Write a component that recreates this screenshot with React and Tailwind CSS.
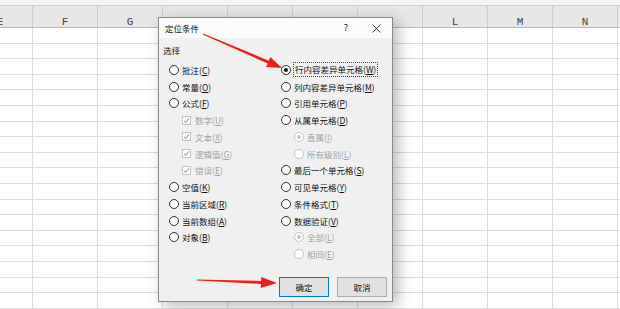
import React from "react";

const COLS = ["E", "F", "G", "H", "I", "J", "K", "L", "M", "N", ""];
const ROWS = Array.from({ length: 18 });

function arrowPoints(x1, y1, x2, y2, headLen, headW, tail, shaft) {
  const dx = x2 - x1;
  const dy = y2 - y1;
  const len = Math.hypot(dx, dy);
  const ux = dx / len;
  const uy = dy / len;
  const nx = -uy;
  const ny = ux;
  const bx = x2 - ux * headLen;
  const by = y2 - uy * headLen;
  const p = [
    [x1 + nx * tail, y1 + ny * tail],
    [bx + nx * shaft, by + ny * shaft],
    [bx + nx * headW, by + ny * headW],
    [x2, y2],
    [bx - nx * headW, by - ny * headW],
    [bx - nx * shaft, by - ny * shaft],
    [x1 - nx * tail, y1 - ny * tail],
  ];
  return p.map((q) => q[0].toFixed(2) + "," + q[1].toFixed(2)).join(" ");
}

function Label({ text, k, disabled }) {
  return (
    <span className={disabled ? "text-[#a3a3a3]" : "text-[#111111]"}>
      {text}(<span className="underline underline-offset-1">{k}</span>)
    </span>
  );
}

function Radio({ checked, disabled }) {
  return (
    <span
      className={
        "flex h-[10px] w-[10px] shrink-0 items-center justify-center rounded-full border bg-white " +
        (disabled ? "border-[#c4c4c4]" : "border-[#333333]")
      }
    >
      {checked ? (
        <span
          className={
            "h-[4px] w-[4px] rounded-full " +
            (disabled ? "bg-[#c4c4c4]" : "bg-[#1a1a1a]")
          }
        />
      ) : null}
    </span>
  );
}

function Check() {
  return (
    <span className="flex h-[9px] w-[9px] shrink-0 items-center justify-center border border-[#c4c4c4] bg-white">
      <svg width="7" height="7" viewBox="0 0 7 7">
        <path d="M1 3.6 L2.8 5.4 L6 1.4" fill="none" stroke="#a8a8a8" strokeWidth="1.1" />
      </svg>
    </span>
  );
}

function Row({ children, indent }) {
  return (
    <div className={"flex h-[16.75px] items-center gap-[3px] " + (indent ? "ml-[13px]" : "")}>
      {children}
    </div>
  );
}

export default function App() {
  const left = [
    { t: "批注", k: "C" },
    { t: "常量", k: "O" },
    { t: "公式", k: "F" },
    { t: "数字", k: "U", check: true },
    { t: "文本", k: "X", check: true },
    { t: "逻辑值", k: "G", check: true },
    { t: "错误", k: "E", check: true },
    { t: "空值", k: "K" },
    { t: "当前区域", k: "R" },
    { t: "当前数组", k: "A" },
    { t: "对象", k: "B" },
  ];
  const right = [
    { t: "行内容差异单元格", k: "W", checked: true, focus: true },
    { t: "列内容差异单元格", k: "M" },
    { t: "引用单元格", k: "P" },
    { t: "从属单元格", k: "D" },
    { t: "直属", k: "I", sub: true, checked: true },
    { t: "所有级别", k: "L", sub: true },
    { t: "最后一个单元格", k: "S" },
    { t: "可见单元格", k: "Y" },
    { t: "条件格式", k: "T" },
    { t: "数据验证", k: "V" },
    { t: "全部", k: "L", sub: true, checked: true },
    { t: "相同", k: "E", sub: true },
  ];

  return (
    <div className="relative h-[309px] w-[620px] overflow-hidden bg-white font-['Noto_Sans_CJK_SC','Noto_Sans',sans-serif]">
      {/* spreadsheet */}
      <div className="h-[6px] border-b border-[#d2d2d2] bg-[#f4f4f4]" />
      <div className="flex h-[22px] border-b border-[#b9b9b9] bg-[#e7e7e7]">
        <div className="ml-[-32px] flex">
          {COLS.map((c, i) => (
            <div
              key={i}
              className="flex h-[21px] w-[65px] shrink-0 items-start justify-center border-r border-[#cfcfcf] pt-[11px] font-['Liberation_Mono',monospace] text-[11px] leading-[11px] text-[#444]"
            >
              {c}
            </div>
          ))}
        </div>
      </div>
      {ROWS.map((_, i) => (
        <div key={i} className="flex h-[15.6px] border-b border-[#dcdcdc]">
          <div className="ml-[-32px] flex">
            {COLS.map((c, j) => (
              <div key={j} className="h-full w-[65px] shrink-0 border-r border-[#dcdcdc]" />
            ))}
          </div>
        </div>
      ))}

      {/* dialog */}
      <div className="absolute left-[158px] top-[17px] flex h-[285px] w-[235px] flex-col border border-[#8a8a8a] bg-[#f0f0f0] text-[8.5px] leading-[12px] shadow-[5px_4px_14px_rgba(0,0,0,0.28)]">
        <div className="flex h-[20px] items-center bg-[#fbfbfb]">
          <div className="flex-1 pl-[6px] text-[#111]">定位条件</div>
          <div className="flex w-[30px] justify-center text-[9px] text-[#111]">?</div>
          <div className="mr-[1px] flex w-[30px] items-center justify-center">
            <svg width="9" height="9" viewBox="0 0 9 9">
              <path d="M0.5 0.5 L8.5 8.5 M8.5 0.5 L0.5 8.5" stroke="#222" strokeWidth="0.9" />
            </svg>
          </div>
        </div>
        <div className="mt-[6px] pl-[4px] text-[#111]">选择</div>
        <div className="mt-[5.5px] flex pl-[10px]">
          <div className="flex w-[112px] flex-col">
            {left.map((o) => (
              <Row key={o.t} indent={o.check}>
                {o.check ? (
                  <>
                    <Check />
                    <span className="ml-[1px]">
                      <Label text={o.t} k={o.k} disabled />
                    </span>
                  </>
                ) : (
                  <>
                    <Radio />
                    <Label text={o.t} k={o.k} />
                  </>
                )}
              </Row>
            ))}
          </div>
          <div className="flex flex-col">
            {right.map((o) => (
              <Row key={o.t} indent={o.sub}>
                <Radio checked={o.checked} disabled={o.sub} />
                {o.focus ? (
                  <span className="ml-[-1px] border border-dotted border-[#444] px-[1px] leading-[13px]">
                    <Label text={o.t} k={o.k} />
                  </span>
                ) : (
                  <Label text={o.t} k={o.k} disabled={o.sub} />
                )}
              </Row>
            ))}
          </div>
        </div>
        <div className="mt-auto flex justify-end gap-[8px] pb-[4px] pr-[5px]">
          <div className="flex h-[20px] w-[50px] items-center justify-center border border-[#0078d7] bg-[#e1e1e1] text-[#111]">
            确定
          </div>
          <div className="flex h-[20px] w-[50px] items-center justify-center border border-[#adadad] bg-[#e1e1e1] text-[#111]">
            取消
          </div>
        </div>
      </div>

      {/* red arrows */}
      <svg className="pointer-events-none absolute left-0 top-0" width="620" height="309">
        <polygon points={arrowPoints(203, 34, 282, 68, 15, 5.5, 0.6, 1.5)} fill="#e8231e" />
        <polygon points={arrowPoints(197, 280, 277, 283, 16, 5.5, 0.6, 1.5)} fill="#e8231e" />
      </svg>
    </div>
  );
}
